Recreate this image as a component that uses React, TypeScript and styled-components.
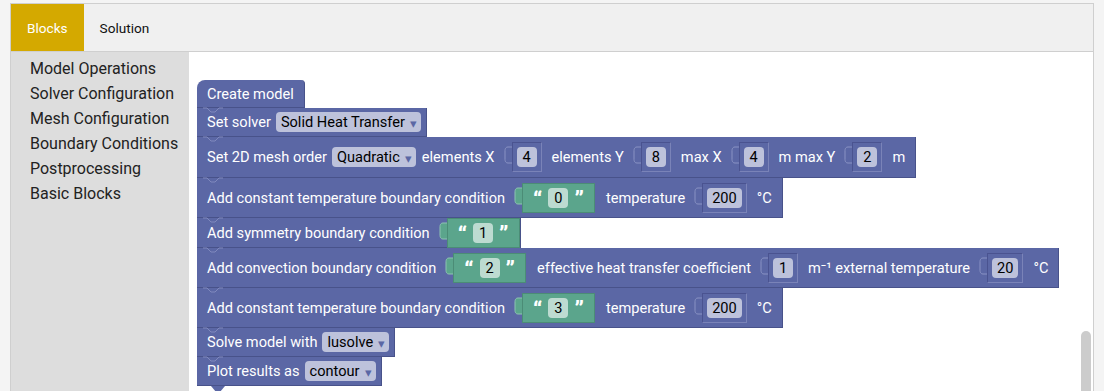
import React from "react";
import styled, { createGlobalStyle } from "styled-components";

const Global = createGlobalStyle`
  html, body { margin: 0; padding: 0; background: #f4f4f4; }
  body { font-family: Roboto, "Liberation Sans", sans-serif; overflow: hidden; }
`;

const BLOCK = "#5b67a5";
const GREEN = "#5ba58c";

const Frame = styled.div`
  margin: 3px 10px 0 10px;
  height: 388px;
  border: 1px solid #cfcfcf;
  border-bottom: none;
  display: flex;
  flex-direction: column;
  background: #fff;
  overflow: hidden;
`;

const TabBar = styled.div`
  display: flex;
  height: 47px;
  background: #f0f0f0;
  border-bottom: 1px solid #cfcfcf;
  flex-shrink: 0;
`;

const TabBtn = styled.div<{ $active?: boolean }>`
  display: flex;
  align-items: center;
  justify-content: center;
  padding: 0 16px;
  font-size: 13.6px;
  color: ${(p) => (p.$active ? "#fff" : "#111")};
  background: ${(p) => (p.$active ? "#d4a900" : "transparent")};
`;

const Body = styled.div`
  flex: 1;
  display: flex;
  min-height: 0;
`;

const Sidebar = styled.div`
  width: 178px;
  background: #dddddd;
  padding: 4px 0 0 19px;
  box-sizing: border-box;
  flex-shrink: 0;
`;

const Category = styled.div`
  font-size: 16px;
  line-height: 25px;
  color: #222;
`;

const Workspace = styled.div`
  flex: 1;
  position: relative;
  padding: 28px 0 0 8px;
  overflow: hidden;
`;

const Scrollbar = styled.div`
  position: absolute;
  right: 2px;
  top: 279px;
  width: 10px;
  height: 120px;
  border-radius: 5px;
  background: #cccccc;
`;

const Stack = styled.div`
  display: flex;
  flex-direction: column;
  align-items: flex-start;
`;

const Block = styled.div<{ $h: number; $first?: boolean; $last?: boolean }>`
  position: relative;
  display: flex;
  align-items: center;
  box-sizing: border-box;
  height: ${(p) => p.$h}px;
  padding: 0 0 0 10px;
  background: ${BLOCK};
  color: #fff;
  font-size: 14.6px;
  white-space: nowrap;
  border-bottom: 1px solid #48528a;
  border-right: 1px solid #48528a;
  border-radius: ${(p) => (p.$first ? "8px 4px 0 0" : "0")};
  ${(p) =>
    p.$last
      ? `&::after {
    content: "";
    position: absolute;
    left: 14px;
    bottom: -6px;
    width: 14px;
    height: 5px;
    background: ${BLOCK};
    clip-path: polygon(0 0, 100% 0, 70% 100%, 30% 100%);
  }`
      : ""}
`;

const Notch = styled.svg`
  position: absolute;
  left: 6px;
  top: -1px;
  width: 20px;
  height: 6px;
`;

const Label = styled.span<{ $gapL?: number; $end?: boolean }>`
  margin-left: ${(p) => p.$gapL ?? 0}px;
  margin-right: ${(p) => (p.$end ? 10 : 0)}px;
`;

const Dropdown = styled.span<{ $end?: boolean }>`
  display: inline-flex;
  align-items: center;
  height: 20px;
  padding: 0 4px 0 5px;
  margin-left: 5px;
  margin-right: ${(p) => (p.$end ? 5 : 0)}px;
  border-radius: 4px;
  background: #bdc2db;
  color: #000;
`;

const Arrow = styled.span`
  color: ${BLOCK};
  font-size: 13px;
  margin-left: 5px;
  padding-top: 2px;
`;

const Slot = styled.span<{ $end?: boolean; $green?: boolean }>`
  display: inline-flex;
  align-items: center;
  margin: 0 ${(p) => (p.$end ? 0 : p.$green ? 11 : 10)}px 0 9px;
`;

const TabSvg = styled.svg`
  width: 8px;
  height: 30px;
  display: block;
`;

const SlotBox = styled.span<{ $green?: boolean }>`
  display: inline-flex;
  align-items: center;
  box-sizing: border-box;
  height: 30px;
  padding: ${(p) => (p.$green ? "0" : "0 4px")};
  background: ${(p) => (p.$green ? GREEN : BLOCK)};
  border: 1px solid ${(p) => (p.$green ? "#4b8c76" : "#7a83b8")};
  border-left-color: ${(p) => (p.$green ? "#4b8c76" : "#4a5390")};
  border-top-color: ${(p) => (p.$green ? "#4b8c76" : "#4a5390")};
`;

const Pill = styled.span<{ $green?: boolean }>`
  display: inline-flex;
  align-items: center;
  justify-content: center;
  min-width: 10px;
  height: 20px;
  padding: 0 5px;
  border-radius: 4px;
  background: ${(p) => (p.$green ? "#bddbd1" : "#bdc2db")};
  color: #000;
`;

const Quote = styled.span<{ $side: "l" | "r" }>`
  display: inline-block;
  height: 20px;
  line-height: 24px;
  color: #fff;
  font-weight: 900;
  font-family: Roboto, "Liberation Sans", sans-serif;
  font-size: 22px;
  margin: 0 ${(p) => (p.$side === "l" ? 6 : 10)}px 0 ${(p) => (p.$side === "l" ? 10 : 6)}px;
`;

const TopNotch = () => (
  <Notch viewBox="0 0 20 6">
    <path d="M0 1 H4 L8 5 H12 L16 1 H20" fill="none" stroke="#8089bd" strokeWidth="1" />
  </Notch>
);

function TabShape({ green }: { green?: boolean }) {
  const stroke = green ? "#8ec4b2" : "#8a93c4";
  return (
    <TabSvg viewBox="0 0 8 30">
      <path
        d="M8 5 H4 C1 5 1 8 1 9 V17 C1 18 1 21 4 21 H8"
        fill={green ? GREEN : "none"}
        stroke={stroke}
        strokeWidth="1"
      />
    </TabSvg>
  );
}

const Num = ({ v }: { v: string }) => (
  <Slot>
    <TabShape />
    <SlotBox>
      <Pill>{v}</Pill>
    </SlotBox>
  </Slot>
);

const Txt = ({ v, end }: { v: string; end?: boolean }) => (
  <Slot $end={end} $green>
    <TabShape green />
    <SlotBox $green>
      <Quote $side="l">“</Quote>
      <Pill $green>{v}</Pill>
      <Quote $side="r">”</Quote>
    </SlotBox>
  </Slot>
);

const Dd = ({ v, end }: { v: string; end?: boolean }) => (
  <Dropdown $end={end}>
    {v}
    <Arrow>▾</Arrow>
  </Dropdown>
);

const CATEGORIES = [
  "Model Operations",
  "Solver Configuration",
  "Mesh Configuration",
  "Boundary Conditions",
  "Postprocessing",
  "Basic Blocks",
];

export default function App() {
  return (
    <>
      <Global />
      <Frame>
        <TabBar>
          <TabBtn $active>Blocks</TabBtn>
          <TabBtn>Solution</TabBtn>
        </TabBar>
        <Body>
          <Sidebar>
            {CATEGORIES.map((c) => (
              <Category key={c}>{c}</Category>
            ))}
          </Sidebar>
          <Workspace>
            <Stack>
              <Block $h={28} $first>
                <Label $end>Create model</Label>
              </Block>
              <Block $h={29}>
                <TopNotch />
                <Label>Set solver</Label>
                <Dd v="Solid Heat Transfer" end />
              </Block>
              <Block $h={41}>
                <TopNotch />
                <Label>Set 2D mesh order</Label>
                <Dd v="Quadratic" />
                <Label $gapL={6}>elements X</Label>
                <Num v="4" />
                <Label>elements Y</Label>
                <Num v="8" />
                <Label>max X</Label>
                <Num v="4" />
                <Label>m max Y</Label>
                <Num v="2" />
                <Label $end>m</Label>
              </Block>
              <Block $h={40}>
                <TopNotch />
                <Label>Add constant temperature boundary condition</Label>
                <Txt v="0" />
                <Label>temperature</Label>
                <Num v="200" />
                <Label $end>°C</Label>
              </Block>
              <Block $h={30}>
                <TopNotch />
                <Label>Add symmetry boundary condition</Label>
                <Txt v="1" end />
              </Block>
              <Block $h={40}>
                <TopNotch />
                <Label>Add convection boundary condition</Label>
                <Txt v="2" />
                <Label>effective heat transfer coefficient</Label>
                <Num v="1" />
                <Label>m⁻¹ external temperature</Label>
                <Num v="20" />
                <Label $end>°C</Label>
              </Block>
              <Block $h={40}>
                <TopNotch />
                <Label>Add constant temperature boundary condition</Label>
                <Txt v="3" />
                <Label>temperature</Label>
                <Num v="200" />
                <Label $end>°C</Label>
              </Block>
              <Block $h={29}>
                <TopNotch />
                <Label>Solve model with</Label>
                <Dd v="lusolve" end />
              </Block>
              <Block $h={29} $last>
                <TopNotch />
                <Label>Plot results as</Label>
                <Dd v="contour" end />
              </Block>
            </Stack>
            <Scrollbar />
          </Workspace>
        </Body>
      </Frame>
    </>
  );
}
